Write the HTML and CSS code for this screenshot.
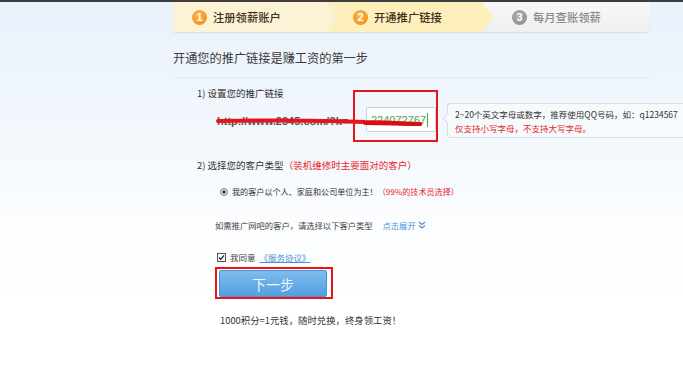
FILE: index.html
```html
<!DOCTYPE html>
<html lang="zh-CN">
<head>
  <meta charset="UTF-8" />
  <meta name="viewport" content="width=device-width, initial-scale=1.0" />
  <title>开通推广链接</title>
  <link rel="stylesheet" href="styles.css">
</head>
<body>
  <div class="topline"></div>

  <div class="page">
    <div class="steps">
      <div class="step step-one"><span class="num">1</span>注册领薪账户</div>
      <div class="step step-two"><span class="num">2</span>开通推广链接</div>
      <div class="step step-three"><span class="num">3</span>每月查账领薪</div>
    </div>

    <h2 class="title">开通您的推广链接是赚工资的第一步</h2>

    <p class="label">1) 设置您的推广链接</p>
    <div class="link-row">
      <span class="url">http://www.2345.com/?k=</span>
      <div class="input-wrap">
        <div class="input">224072767<span class="caret"></span></div>
      </div>
      <div class="tip">
        <p>2~20个英文字母或数字，推荐使用QQ号码，如：q1234567</p>
        <p class="warn">仅支持小写字母，不支持大写字母。</p>
      </div>
      <svg class="strike" width="212" height="12" viewBox="0 0 212 12">
        <path d="M3 5 C50 4 110 5 150 6 C170 6 190 8 205 8" fill="none" stroke="#e8141a" stroke-width="4" stroke-linecap="round"/>
        <path d="M150 7 L205 8" fill="none" stroke="#d40f14" stroke-width="4" stroke-linecap="round"/>
      </svg>
    </div>

    <p class="label label-two">2) 选择您的客户类型<span class="red">（装机维修时主要面对的客户）</span></p>

    <div class="option">
      <svg width="8" height="8" viewBox="0 0 8 8"><circle cx="4" cy="4" r="3.4" fill="#fff" stroke="#666" stroke-width="0.9"/><circle cx="4" cy="4" r="1.8" fill="#333"/></svg>
      <span>我的客户以个人、家庭和公司单位为主！<span class="red">（99%的技术员选择）</span></span>
    </div>

    <div class="more">
      如需推广网吧的客户，请选择以下客户类型
      <a class="expand">点击展开
        <svg width="8" height="8" viewBox="0 0 8 8"><path d="M1 1 L4 3.5 L7 1 M1 4.5 L4 7 L7 4.5" fill="none" stroke="#4b92d8" stroke-width="1.2"/></svg>
      </a>
    </div>

    <div class="agree">
      <svg width="9" height="9" viewBox="0 0 9 9"><rect x="0.5" y="0.5" width="8" height="8" fill="#fff" stroke="#555"/><path d="M2 4.5 L3.8 6.3 L7 2.4" fill="none" stroke="#222" stroke-width="1.3"/></svg>
      <span>我同意</span>
      <a class="terms">《服务协议》</a>
    </div>

    <div class="btn-wrap">
      <button class="next">下一步</button>
    </div>

    <p class="note">1000积分=1元钱，随时兑换，终身领工资！</p>
  </div>
</body>
</html>
```

FILE: styles.css
```css
* {
  margin: 0;
  padding: 0;
  box-sizing: border-box;
}
body {
  font-family: "Liberation Sans", "Noto Sans CJK SC", sans-serif;
  background: linear-gradient(#e9f1fb 0, #f3f8fd 140px, #fdfeff 240px, #fff 300px);
  color: #333;
  height: 373px;
  overflow: hidden;
}
.topline {
  height: 2px;
  background: #3d3d3d;
}
.page {
  margin-left: 173px;
  width: 510px;
}

/* step bar */
.steps {
  display: flex;
  width: 477px;
  height: 30px;
  background: linear-gradient(#f8f8f8, #efefef);
  border-radius: 0 0 3px 3px;
  box-shadow: 0 1px 1px #d9dde2;
}
.step {
  display: flex;
  align-items: center;
  height: 30px;
  font-family: "Noto Sans CJK SC", sans-serif;
  font-size: 11.3px;
  font-weight: 500;
  color: #3a2f1a;
}
.step .num {
  display: inline-flex;
  align-items: center;
  justify-content: center;
  width: 15px;
  height: 15px;
  border-radius: 50%;
  margin-right: 6px;
  background: radial-gradient(circle at 40% 35%, #fbb44a, #ee8a12);
  color: #fff;
  font-family: "Liberation Sans", sans-serif;
  font-size: 11px;
  font-weight: bold;
}
.step-one {
  position: relative;
  z-index: 2;
  width: 164px;
  padding-left: 19px;
  background: #fcf3d6;
  border-radius: 0 0 0 3px;
  clip-path: polygon(0 0, 153px 0, 164px 50%, 153px 100%, 0 100%);
}
.step-two {
  position: relative;
  z-index: 1;
  width: 168px;
  margin-left: -11px;
  padding-left: 27px;
  background: #fdf0bc;
  clip-path: polygon(0 0, 156px 0, 168px 50%, 156px 100%, 0 100%);
}
.step-three {
  padding-left: 23px;
  margin-left: -5px;
  color: #8a8a8a;
}
.step-three .num {
  background: radial-gradient(circle at 40% 35%, #aaa, #8c8c8c);
}

.title {
  margin-top: 18px;
  font-family: "Noto Sans CJK SC", sans-serif;
  font-size: 12.2px;
  font-weight: normal;
  line-height: 16px;
  color: #3a3a3a;
  padding-bottom: 11px;
  border-bottom: 1px solid #e3e9f0;
  width: 477px;
}

.label {
  margin-top: 8px;
  margin-left: 24px;
  font-family: "Noto Sans CJK SC", sans-serif;
  font-size: 9.5px;
  line-height: 14px;
  color: #333;
}
.red {
  color: #e5262b;
}

/* link row */
.link-row {
  position: relative;
  display: flex;
  align-items: center;
  margin-top: 3px;
  margin-left: 44px;
  height: 35px;
}
.url {
  flex-shrink: 0;
  width: 149px;
  font-size: 11px;
  font-weight: bold;
  color: #555;
  white-space: nowrap;
}
.input-wrap {
  position: relative;
  flex-shrink: 0;
}
.input-wrap::after {
  content: "";
  position: absolute;
  left: -13px;
  right: -2px;
  top: -19px;
  bottom: -10px;
  border: 2px solid #e8141a;
}
.input {
  display: flex;
  align-items: center;
  width: 70px;
  height: 25px;
  margin-top: -2px;
  padding-left: 4px;
  background: #fff;
  border: 1px solid #c5d3e0;
  border-radius: 2px;
  font-size: 11px;
  color: #48a548;
}
.caret {
  display: inline-block;
  width: 1px;
  height: 14px;
  margin-left: 1px;
  background: #48a548;
}
.tip {
  position: relative;
  margin-left: 11px;
  flex: 1;
  min-width: 0;
  height: 35px;
  padding: 3px 7px;
  background: #f7fafd;
  border: 1px solid #d5dee8;
  border-right: none;
  border-radius: 3px 0 0 3px;
  font-family: "Noto Sans CJK SC", sans-serif;
  font-size: 8.5px;
  line-height: 14px;
  color: #333;
  white-space: nowrap;
}
.tip::before {
  content: "";
  position: absolute;
  left: -4px;
  top: 11px;
  width: 6px;
  height: 6px;
  background: #f7fafd;
  border-left: 1px solid #d5dee8;
  border-bottom: 1px solid #d5dee8;
  transform: rotate(45deg);
}
.tip .warn {
  color: #e5262b;
}
.strike {
  position: absolute;
  left: -2px;
  top: 13px;
}

.label-two {
  margin-top: 20px;
}

.option {
  display: flex;
  align-items: center;
  gap: 4px;
  margin-top: 14px;
  margin-left: 47px;
  font-family: "Noto Sans CJK SC", sans-serif;
  font-size: 8.1px;
  line-height: 12px;
  color: #333;
}

.more {
  margin-top: 21px;
  margin-left: 42px;
  font-family: "Noto Sans CJK SC", sans-serif;
  font-size: 8.3px;
  line-height: 12px;
  color: #444;
}
.expand {
  margin-left: 8px;
  color: #4b92d8;
}

.agree {
  display: flex;
  align-items: center;
  gap: 4px;
  margin-top: 20px;
  margin-left: 44px;
  font-family: "Noto Sans CJK SC", sans-serif;
  font-size: 8.5px;
  line-height: 12px;
  color: #444;
}
.terms {
  color: #4b92d8;
  text-decoration: underline;
}

.btn-wrap {
  position: relative;
  width: 108px;
  margin-top: 7px;
  margin-left: 46px;
}
.btn-wrap::after {
  content: "";
  position: absolute;
  left: -4px;
  right: -6px;
  top: -3px;
  bottom: -2px;
  border: 2px solid #e8141a;
}
.next {
  display: block;
  width: 108px;
  height: 27px;
  border: 1px solid #4a93d4;
  border-radius: 2px;
  background: linear-gradient(#7dbcee, #539fe0);
  color: #eef6ff;
  font-family: "Noto Sans CJK SC", sans-serif;
  font-size: 14px;
}

.note {
  margin-top: 16px;
  margin-left: 47px;
  font-family: "Noto Sans CJK SC", sans-serif;
  font-size: 9.4px;
  line-height: 14px;
  color: #333;
}
```
